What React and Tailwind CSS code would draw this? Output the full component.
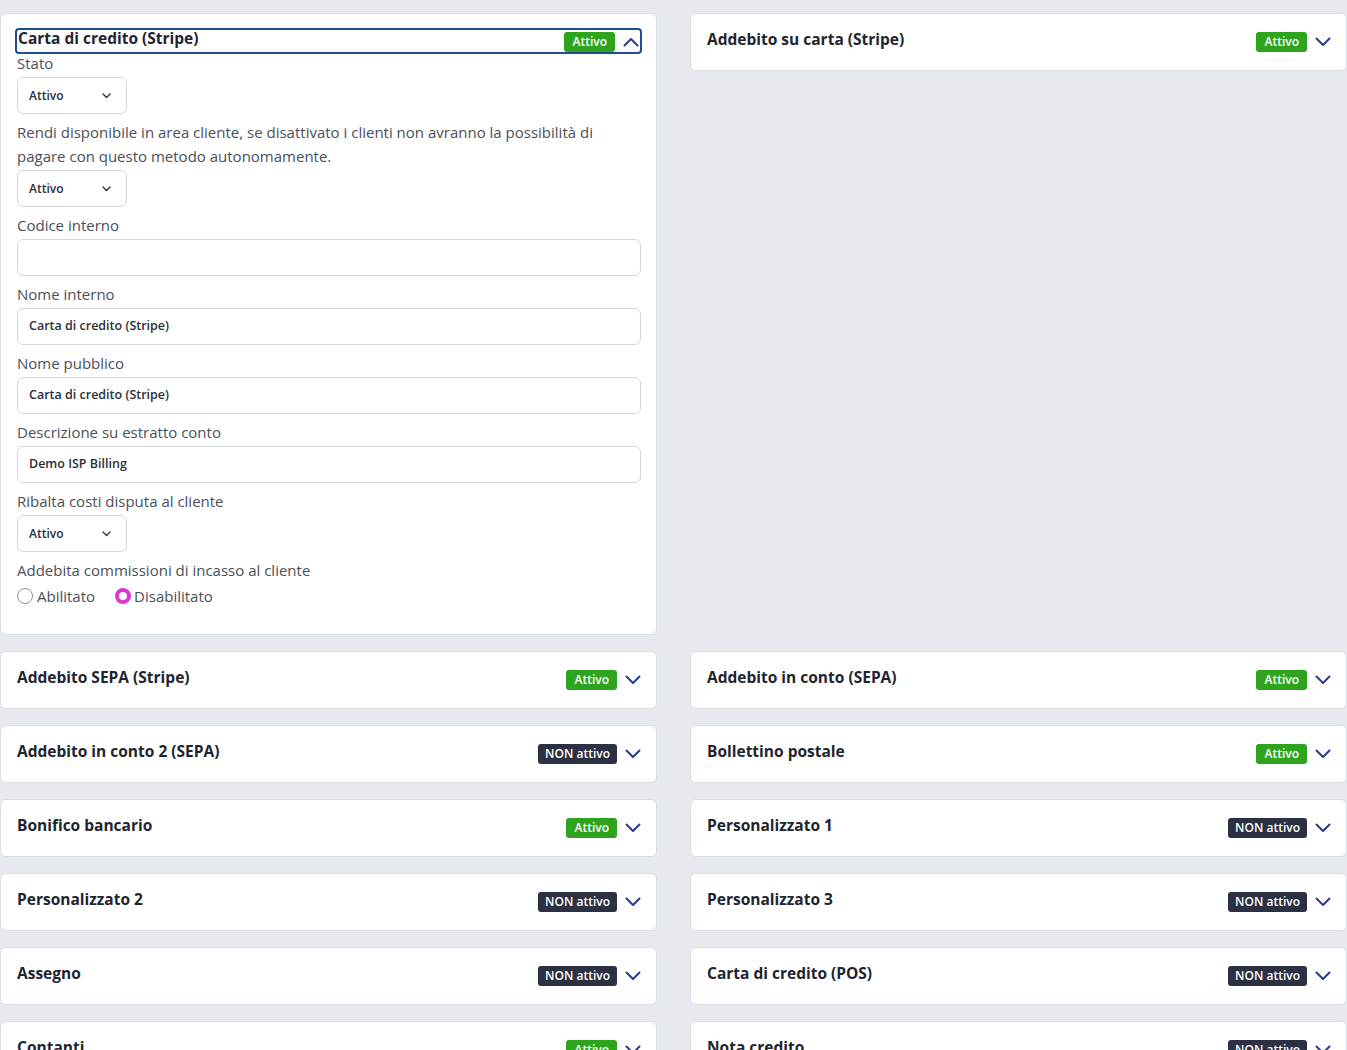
import React from "react";

const font = { fontFamily: "'Open Sans', 'Noto Sans', 'Liberation Sans', sans-serif" };

function Chevron({ up = false }) {
  return (
    <svg width="16" height="10" viewBox="0 0 16 10" className="shrink-0">
      {up ? (
        <path d="M1.5 8.5 L8 2 L14.5 8.5" fill="none" stroke="#2b3a8f" strokeWidth="2" strokeLinecap="round" strokeLinejoin="round" />
      ) : (
        <path d="M1.5 1.5 L8 8 L14.5 1.5" fill="none" stroke="#2b3a8f" strokeWidth="2" strokeLinecap="round" strokeLinejoin="round" />
      )}
    </svg>
  );
}

function Badge({ active }) {
  return active ? (
    <span className="inline-flex items-center h-[20px] px-[8px] rounded-[3px] bg-[#2ea41e] text-white text-[12px] font-semibold leading-none">Attivo</span>
  ) : (
    <span className="inline-flex items-center h-[20px] px-[7px] rounded-[3px] bg-[#2b3042] text-white text-[12px] font-semibold leading-none">NON attivo</span>
  );
}

function Collapsed({ title, active }) {
  return (
    <div className="bg-white rounded-[6px] border border-[#d9dde4] h-[58px] flex items-center pl-[16px] pr-[15px]">
      <div className="flex-1 text-[15.5px] font-bold text-[#1e2530] -mt-[4px]">{title}</div>
      <div className="flex items-center gap-[8px]">
        <Badge active={active} />
        <Chevron />
      </div>
    </div>
  );
}

function Label({ children }) {
  return <div className="text-[15px] leading-[24px] text-[#4a4f58] mb-[2px]">{children}</div>;
}

function Select() {
  return (
    <div className="w-[110px] h-[37px] border border-[#d3d7de] rounded-[6px] flex items-center justify-between pl-[11px] pr-[15px] mb-[6px]">
      <span className="text-[12px] font-semibold text-[#2a2f37]">Attivo</span>
      <svg width="9" height="6" viewBox="0 0 9 6">
        <path d="M1 1 L4.5 4.5 L8 1" fill="none" stroke="#333" strokeWidth="1.4" strokeLinecap="round" strokeLinejoin="round" />
      </svg>
    </div>
  );
}

function Input({ value }) {
  return (
    <div className="h-[37px] border border-[#d3d7de] rounded-[6px] flex items-center px-[11px] mb-[6px]">
      <span className="text-[12.5px] font-semibold text-[#2a2f37]">{value}</span>
    </div>
  );
}

function Expanded() {
  return (
    <div className="bg-white rounded-[6px] border border-[#d9dde4] pl-[16px] pr-[15px] pt-[14px] pb-[26px]">
      <div className="-ml-[2px] -mr-[1px] h-[26px] border-2 border-[#1f4f8f] rounded-[4px] flex items-center pl-[1px] pr-[1px]">
        <div className="flex-1 text-[15.5px] font-bold text-[#1e2530] -mt-[4px]">Carta di credito (Stripe)</div>
        <div className="flex items-center gap-[8px] mt-[1px]">
          <Badge active />
          <Chevron up />
        </div>
      </div>
      <div className="-mt-[3px]">
        <Label>Stato</Label>
        <Select />
        <Label>
          Rendi disponibile in area cliente, se disattivato i clienti non avranno la possibilità di
          <br />
          pagare con questo metodo autonomamente.
        </Label>
        <Select />
        <Label>Codice interno</Label>
        <Input value="" />
        <Label>Nome interno</Label>
        <Input value="Carta di credito (Stripe)" />
        <Label>Nome pubblico</Label>
        <Input value="Carta di credito (Stripe)" />
        <Label>Descrizione su estratto conto</Label>
        <Input value="Demo ISP Billing" />
        <Label>Ribalta costi disputa al cliente</Label>
        <Select />
        <Label>Addebita commissioni di incasso al cliente</Label>
        <div className="flex items-center text-[15px] leading-[24px] text-[#4a4f58]">
          <span className="w-[16px] h-[16px] rounded-full border border-[#8a8f98] mr-[4px]"></span>
          <span className="mr-[20px]">Abilitato</span>
          <span className="w-[16px] h-[16px] rounded-full border-[4px] border-[#dc36d4] bg-white mr-[3px]"></span>
          <span>Disabilitato</span>
        </div>
      </div>
    </div>
  );
}

const rows = [
  ["Addebito SEPA (Stripe)", true, "Addebito in conto (SEPA)", true],
  ["Addebito in conto 2 (SEPA)", false, "Bollettino postale", true],
  ["Bonifico bancario", true, "Personalizzato 1", false],
  ["Personalizzato 2", false, "Personalizzato 3", false],
  ["Assegno", false, "Carta di credito (POS)", false],
  ["Contanti", true, "Nota credito", false],
];

export default function App() {
  return (
    <div style={font} className="min-h-screen h-[1050px] overflow-hidden bg-[#e6e9ee] pt-[13px]">
      <div className="grid grid-cols-2 gap-x-[33px] gap-y-[16px] items-start">
        <Expanded />
        <Collapsed title="Addebito su carta (Stripe)" active />
        {rows.map((r) => (
          <React.Fragment key={r[0]}>
            <Collapsed title={r[0]} active={r[1]} />
            <Collapsed title={r[2]} active={r[3]} />
          </React.Fragment>
        ))}
      </div>
    </div>
  );
}
